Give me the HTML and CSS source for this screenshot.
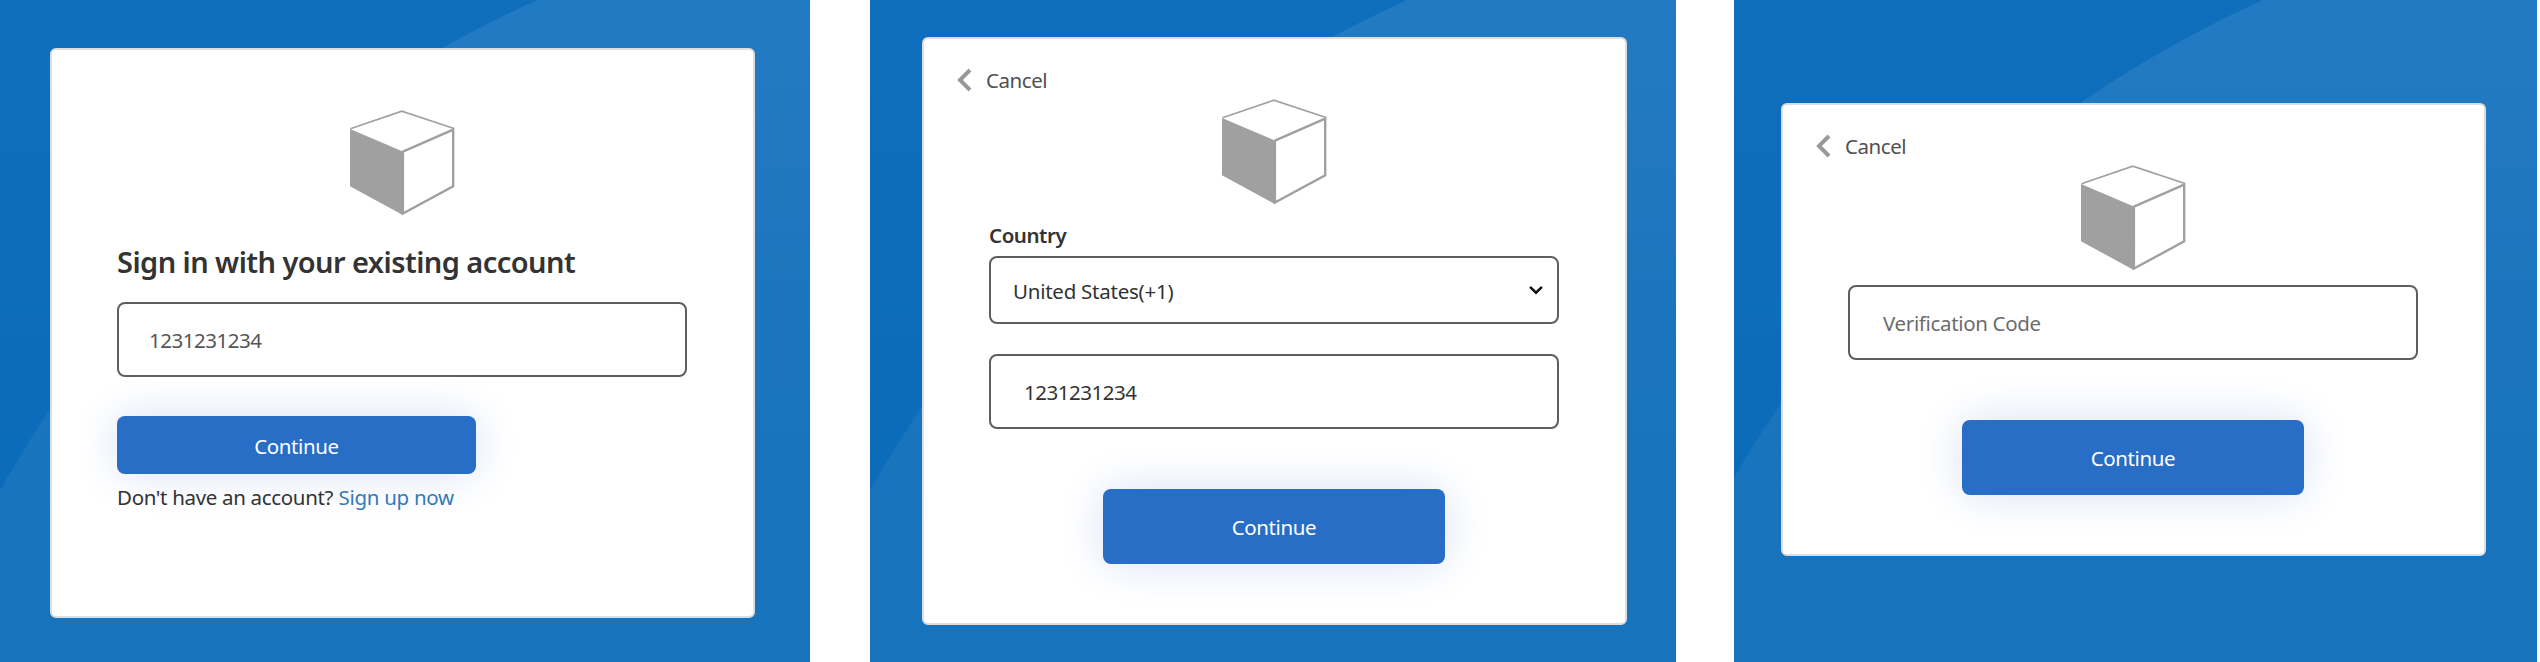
FILE: index.html
```html
<!DOCTYPE html>
<html lang="en">
<head>
<meta charset="utf-8">
<title>Sign in</title>
<link rel="stylesheet" href="styles.css">
</head>
<body>
<svg class="defs" width="0" height="0" aria-hidden="true">
  <symbol id="cube" viewBox="0 0 105 106">
    <path d="M.5 18.8 51.8 1.2 104 18.6" fill="none" stroke="#a0a0a0" stroke-width="1.6"/>
    <path d="M0 19 52.8 41.5V105L0 76.3Z" fill="#a0a0a0"/>
    <path d="M52.9 41.7 103.2 19.6V76.4L52.9 103.6Z" fill="none" stroke="#a0a0a0" stroke-width="2.4"/>
  </symbol>
  <symbol id="back" viewBox="0 0 15 24">
    <path d="M13 2 3 12 13 22" fill="none" stroke="#999" stroke-width="4"/>
  </symbol>
</svg>
<main class="screens">
  <section class="screen screen-signin">
    <div class="card">
      <svg class="logo"><use href="#cube"/></svg>
      <h1 class="heading"><span class="t-heading">Sign in with your existing account</span></h1>
      <div class="field field-muted"><span class="t-digits">1231231234</span></div>
      <div class="button button-wide"><span class="t-continue">Continue</span></div>
      <p class="signup"><span class="t-ask">Don't have an account?</span> <a class="t-link">Sign up now</a></p>
    </div>
  </section>
  <section class="screen screen-phone">
    <div class="card">
      <div class="cancel"><svg class="back"><use href="#back"/></svg><span class="t-cancel">Cancel</span></div>
      <svg class="logo"><use href="#cube"/></svg>
      <div class="label"><span class="t-country">Country</span></div>
      <div class="select"><span class="t-us">United States(+1)</span>
        <svg class="caret" viewBox="0 0 14 9"><path d="M1.8 1.6 7 6.7 12.2 1.6" fill="none" stroke="#111" stroke-width="2.5" stroke-linecap="round"/></svg>
      </div>
      <div class="field"><span class="t-digits">1231231234</span></div>
      <div class="button"><span class="t-continue">Continue</span></div>
    </div>
  </section>
  <section class="screen screen-code">
    <div class="card">
      <div class="cancel"><svg class="back"><use href="#back"/></svg><span class="t-cancel">Cancel</span></div>
      <svg class="logo"><use href="#cube"/></svg>
      <div class="field field-placeholder"><span class="t-code">Verification Code</span></div>
      <div class="button"><span class="t-continue">Continue</span></div>
    </div>
  </section>
</main>
</body>
</html>
```
FILE: styles.css
```css
* { box-sizing: border-box; }
body {
  margin: 0;
  background: #fff;
  color: #333;
  font-family: "Noto Sans", "Open Sans", sans-serif;
  font-size: 20.5px;
  line-height: 30px;
}
.defs { display: block; width: 0; height: 0; }
.screens { display: flex; height: 662px; }
.screen {
  height: 662px;
  overflow: hidden;
  background-image:
    radial-gradient(circle at 1017px 1065px, transparent 1167.5px, rgba(0, 101, 183, .55) 1168.5px),
    linear-gradient(180deg, #217bc2 0, #2178c1 150px, #1c76be 260px, #1974be 450px, #1873bd 662px);
}
.screen-signin { width: 810px; padding: 48px 0 0 50px; }
.screen-phone { width: 806px; margin-left: 60px; padding: 37px 0 0 52px; }
.screen-code {
  width: 803px;
  margin-left: 58px;
  padding: 103px 0 0 47px;
  background-image:
    radial-gradient(circle at 1008px 1062px, transparent 1164.5px, rgba(0, 101, 183, .55) 1165.5px),
    linear-gradient(180deg, #217bc2 0, #2178c1 150px, #1c76be 260px, #1974be 450px, #1873bd 662px);
}
.card {
  display: flex;
  flex-direction: column;
  width: 705px;
  padding: 0 66px 0 65px;
  background: #fff;
  border: 2px solid #ddd;
  border-radius: 6px;
}
.screen-signin .card { height: 570px; padding-top: 60px; }
.screen-phone .card { height: 588px; padding-top: 26px; }
.screen-code .card { height: 453px; padding-top: 26px; }
.logo { align-self: center; flex: none; width: 105px; height: 106px; }
.heading {
  margin: 24px 0 19px;
  height: 43px;
  line-height: 43px;
  font-size: 29px;
  font-weight: 600;
}
.heading, .signup, .label, .cancel, .field, .select, .button { white-space: nowrap; }
.t-heading { letter-spacing: -.56px; }
.t-digits { letter-spacing: -.48px; }
.t-continue { letter-spacing: -.4px; }
.t-ask { letter-spacing: -.33px; }
.t-link { letter-spacing: -.28px; }
.t-cancel { letter-spacing: -.45px; }
.t-country { letter-spacing: -.45px; }
.t-us { letter-spacing: -.25px; }
.t-code { letter-spacing: -.34px; }
.field, .select {
  display: flex;
  flex: none;
  align-items: center;
  width: 570px;
  height: 75px;
  border: 2px solid #5e5e5e;
  border-radius: 8px;
  background: #fff;
  padding-left: 33px;
}
.field-muted { padding-left: 30px; color: #555; }
.field-placeholder { color: #6c6c6c; }
.button {
  display: flex;
  flex: none;
  align-items: center;
  justify-content: center;
  align-self: center;
  width: 342px;
  height: 75px;
  border-radius: 8px;
  background: #286dc6;
  color: #fff;
  box-shadow: 0 0 45px 0 #dae1f7;
}
.button-wide { align-self: flex-start; width: 359px; height: 58px; margin-top: 39px; padding-top: 2px; }
.signup { margin: 8px 0 0; color: #333; position: relative; }
.signup a { color: #337ab7; }
.cancel {
  display: flex;
  align-items: center;
  height: 30px;
  margin-left: -32px;
  color: #505050;
}
.back { width: 15px; height: 24px; margin-right: 14px; }
.screen-phone .logo, .screen-code .logo { margin-top: 4px; }
.label { margin-top: 15px; height: 30px; font-weight: 600; }
.select { height: 68px; margin: 6px 0 30px; padding: 0 14px 0 22px; justify-content: space-between; }
.t-us { padding-top: 2px; }
.caret { width: 14px; height: 9px; }
.screen-phone .button { margin-top: 60px; }
.screen-code .field { margin-top: 14px; }
.screen-code .button { margin-top: 60px; }
```
